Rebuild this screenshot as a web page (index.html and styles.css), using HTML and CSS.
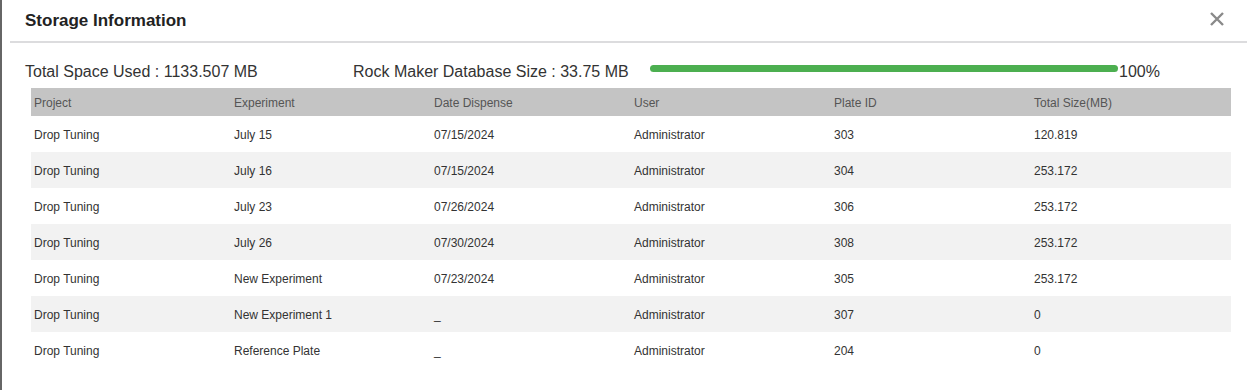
FILE: index.html
```html
<!DOCTYPE html>
<html lang="en">
<head>
    <meta charset="UTF-8">
    <title>Storage Information</title>
    <link rel="stylesheet" href="styles.css">
</head>
<body>

<div class="modal">
    <div class="modal-header">
        <h2>Storage Information</h2>
        <button class="close" title="Close">
            <svg width="16" height="16" viewBox="0 0 16 16">
                <path d="M2 2 L14 14 M14 2 L2 14" stroke="#8a8a8a" stroke-width="2.4" fill="none"/>
            </svg>
        </button>
    </div>
    <div class="modal-body">
        <div class="summary">
            <span class="total">Total Space Used : 1133.507 MB</span>
            <span class="dbsize">Rock Maker Database Size : 33.75 MB</span>
            <div class="progress"><div class="progress-bar" style="width: 100%"></div></div>
            <span class="percent">100%</span>
        </div>
        <table class="storage">
            <thead>
                <tr>
                    <th>Project</th>
                    <th>Experiment</th>
                    <th>Date Dispense</th>
                    <th>User</th>
                    <th>Plate ID</th>
                    <th>Total Size(MB)</th>
                </tr>
            </thead>
            <tbody>
                <tr><td>Drop Tuning</td><td>July 15</td><td>07/15/2024</td><td>Administrator</td><td>303</td><td>120.819</td></tr>
                <tr><td>Drop Tuning</td><td>July 16</td><td>07/15/2024</td><td>Administrator</td><td>304</td><td>253.172</td></tr>
                <tr><td>Drop Tuning</td><td>July 23</td><td>07/26/2024</td><td>Administrator</td><td>306</td><td>253.172</td></tr>
                <tr><td>Drop Tuning</td><td>July 26</td><td>07/30/2024</td><td>Administrator</td><td>308</td><td>253.172</td></tr>
                <tr><td>Drop Tuning</td><td>New Experiment</td><td>07/23/2024</td><td>Administrator</td><td>305</td><td>253.172</td></tr>
                <tr><td>Drop Tuning</td><td>New Experiment 1</td><td>_</td><td>Administrator</td><td>307</td><td>0</td></tr>
                <tr><td>Drop Tuning</td><td>Reference Plate</td><td>_</td><td>Administrator</td><td>204</td><td>0</td></tr>
            </tbody>
        </table>
    </div>
</div>

</body>
</html>
```

FILE: styles.css
```css
body {
    font-family: Arial, "Liberation Sans", sans-serif;
    margin: 0;
    background-color: white;
}

.modal {
    border-left: 2px solid #666;
    height: 390px;
    box-sizing: border-box;
}

.modal-header {
    display: flex;
    justify-content: space-between;
    align-items: center;
    height: 41px;
    margin-left: 8px;
    padding-left: 15px;
    padding-right: 22px;
    border-bottom: 2px solid #dcdcde;
}

h2 {
    margin: 0;
    font-size: 17px;
    color: #222;
}

.close {
    background: none;
    border: none;
    padding: 0;
    cursor: pointer;
    display: flex;
    margin-top: -4px;
}

.modal-body {
    padding: 0 0 0 23px;
}

.summary {
    display: flex;
    align-items: center;
    height: 45px;
    box-sizing: border-box;
    padding-top: 13px;
    font-size: 16px;
    color: #333;
}

.total {
    width: 328px;
}

.dbsize {
    width: 297px;
}

.progress {
    width: 468px;
    height: 7px;
    margin-bottom: 8px;
}

.progress-bar {
    height: 100%;
    background-color: #4caf50;
    border-radius: 4px;
}

.percent {
    margin-left: 1px;
}

.storage {
    border-collapse: collapse;
    width: 1200px;
    margin-left: 6px;
    font-size: 12px;
    color: #333;
    table-layout: fixed;
}

.storage th {
    background-color: #c4c4c4;
    color: #555;
    font-weight: normal;
    text-align: left;
    height: 28px;
    padding: 2px 3px 0;
    box-sizing: border-box;
}

.storage td {
    height: 36px;
    padding: 2px 3px 0;
    box-sizing: border-box;
}

.storage tbody tr:nth-child(even) {
    background-color: #f2f2f2;
}
```
